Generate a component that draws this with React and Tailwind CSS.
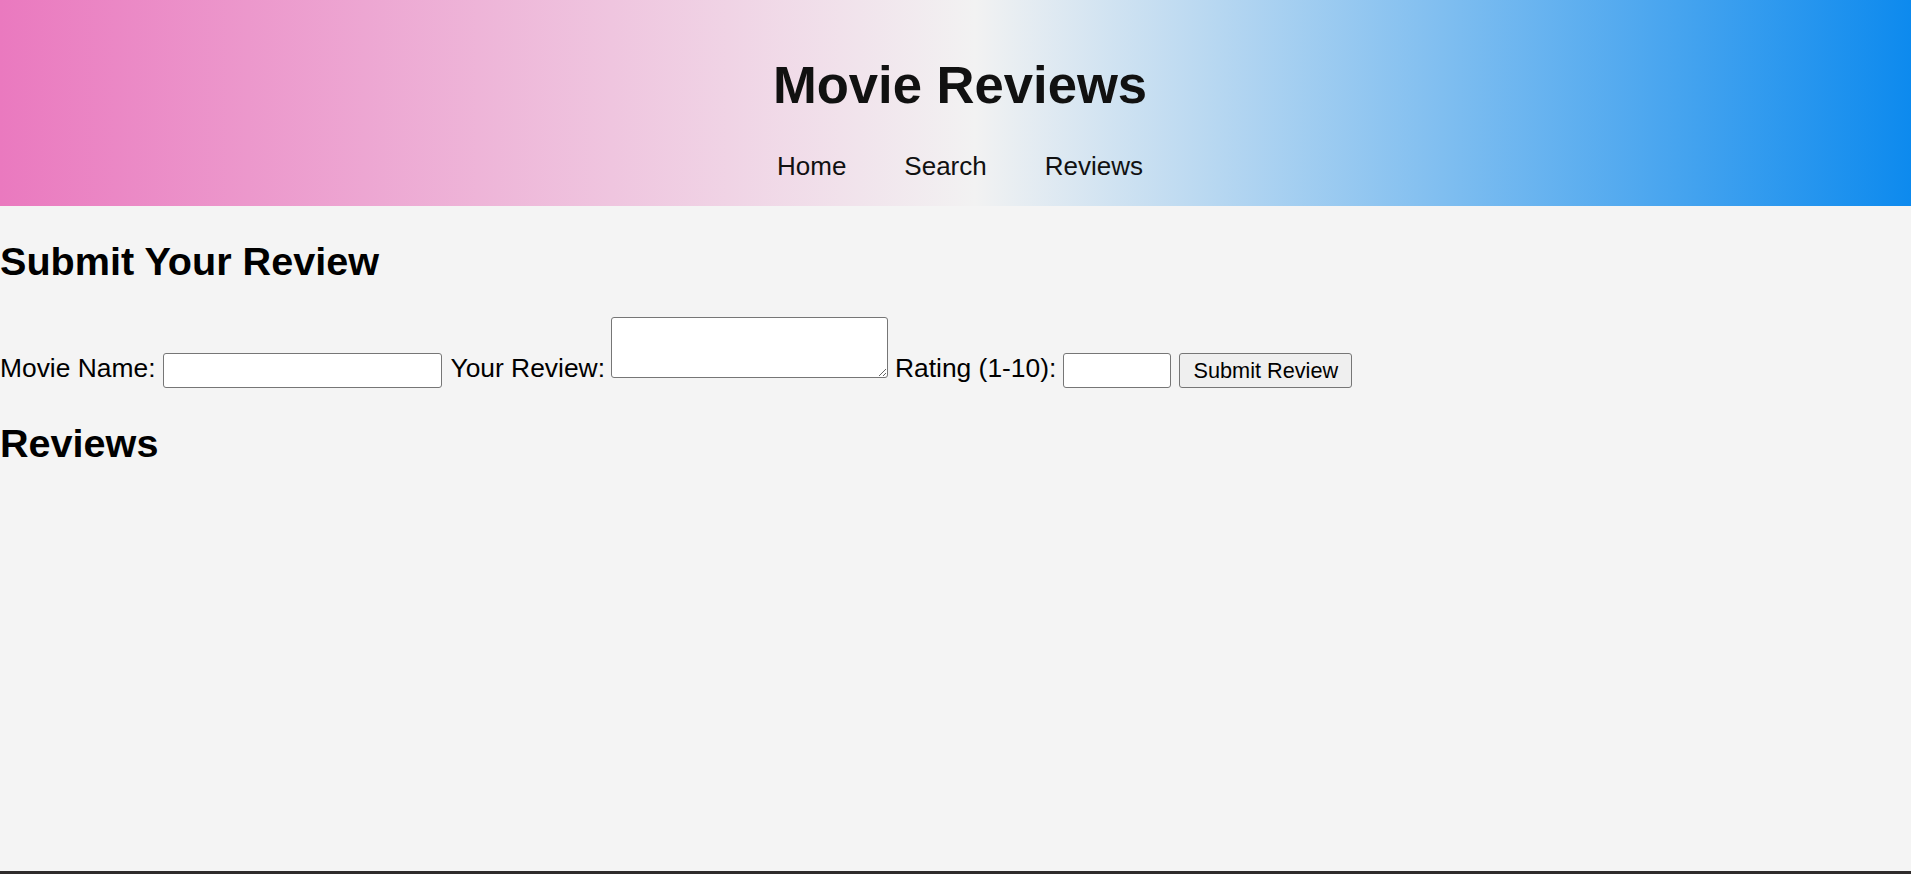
export default function App() {
  return (
    <div className="flex h-[874px] flex-col bg-[#f4f4f4] font-['Liberation_Sans',Arial,sans-serif] text-black">
      <header className="flex h-[206px] flex-col items-center bg-linear-to-r/srgb from-[#ea79bf] via-[#f2f2f2] via-51% to-[#0d8aee] pl-[9px] pt-[55px]">
        <h1 className="text-[52.6px] font-bold leading-[59px] text-[#111111]">Movie Reviews</h1>
        <nav className="mt-[38px] flex gap-[58px] text-[26px] leading-[29px] text-[#111111]">
          <a href="#">Home</a>
          <a href="#">Search</a>
          <a href="#">Reviews</a>
        </nav>
      </header>

      <main className="flex-1">
        <h2 className="mt-[33px] text-[39.6px] font-bold leading-[44px]">Submit Your Review</h2>

        <form className="mt-[34px] flex items-end text-[26.4px] leading-[29px]" onSubmit={(e) => e.preventDefault()}>
          <label className="mb-[5px]">Movie Name:</label>
          <input
            type="text"
            className="ml-[8px] h-[35px] w-[279px] rounded-[3px] border border-[#767676] bg-white"
          />
          <label className="mb-[5px] ml-[8px]">Your Review:</label>
          <textarea className="mb-[10px] ml-[6px] h-[61px] w-[277px] rounded-[3px] border border-[#767676] bg-white"></textarea>
          <label className="mb-[5px] ml-[7px]">Rating (1-10):</label>
          <input
            type="number"
            className="ml-[7px] h-[35px] w-[108px] rounded-[3px] border border-[#767676] bg-white"
          />
          <button
            type="submit"
            className="ml-[8px] h-[35px] w-[173px] rounded-[3px] border border-[#767676] bg-[#efefef] text-[21.7px] leading-[25px]"
          >
            Submit Review
          </button>
        </form>

        <h2 className="mt-[33px] text-[39.6px] font-bold leading-[44px]">Reviews</h2>
      </main>

      <div className="h-[3px] bg-[#2e2b2b]"></div>
    </div>
  );
}
